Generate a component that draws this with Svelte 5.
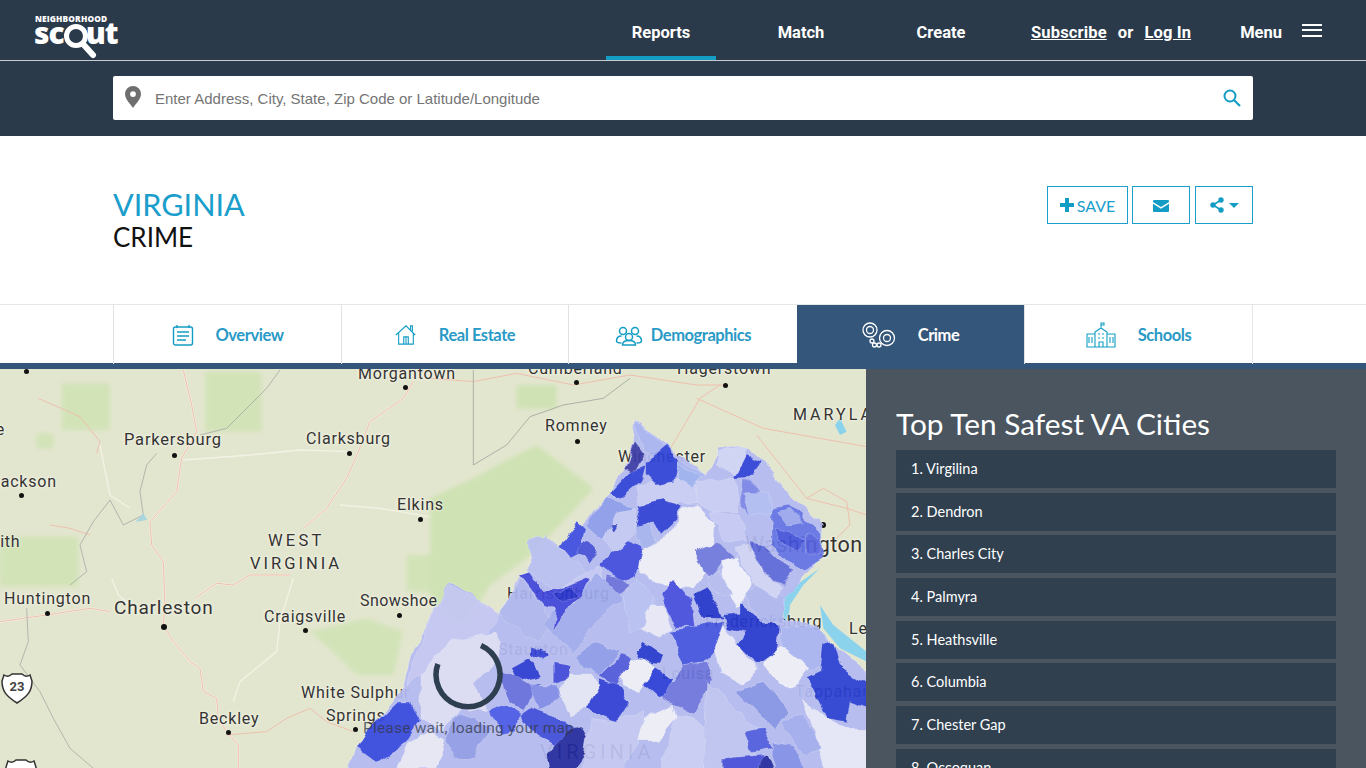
<script>
  const cities = ['Virgilina', 'Dendron', 'Charles City', 'Palmyra', 'Heathsville', 'Columbia', 'Chester Gap', 'Occoquan'];

  // x = left edge, y = vertical centre of each map label, in map coordinates (page y - 369)
  const labels = [
    ['Morgantown', 358, 5, 16], ['Cumberland', 528, 0, 16], ['Hagerstown', 677, 0, 16], ['MARYLAND', 793, 46, 16, 3],
    ['Parkersburg', 124, 71, 16.5, 0.8], ['Clarksburg', 306, 70, 16], ['Romney', 545, 57, 16], ['Elkins', 397, 136, 16],
    ['Jackson', -9, 113, 16], ['Athe', -31, 61, 16], ['Smith', -25, 173, 16], ['WEST', 268, 172, 16.5, 3.2],
    ['VIRGINIA', 250, 195, 16.5, 3], ['Huntington', 4, 230, 16], ['Charleston', 114, 238, 19], ['Craigsville', 264, 248, 16],
    ['Snowshoe', 360, 232, 16, 0.4], ['White Sulphur', 301, 324, 16], ['Springs', 326, 347, 16], ['Beckley', 199, 350, 16],
    ['Winchester', 618, 88, 16], ['Harrisonburg', 507, 225, 16], ['Staunton', 498, 281, 16], ['Washington', 745, 176, 21.5, 0.4],
    ['Fredericksburg', 705, 253, 16], ['Leesburg', 849, 260, 16], ['Louisa', 662, 305, 16], ['Tappahannock', 795, 323, 16],
    ['VIRGINIA', 540, 383, 20, 4]
  ];

  const dots = [
    [26, 2, 2.5], [174, 86, 2.5], [349, 84, 2.5], [21, 126, 2.5], [420, 150, 2.5], [47, 244, 2.5], [164, 258, 3.2],
    [305, 261, 2.5], [399, 246, 2.5], [228, 363, 2.5], [355, 360, 2.5], [405, 18, 2.5], [576, 13, 2.5], [725, 16, 2.5],
    [577, 72, 2.5], [823, 156, 3.4]
  ];

  // choropleth shapes, traced at 3x from x 430 / y 365
  const regions = [
    ['#b4bbf2', '615,165 830,330 870,250 950,245 1000,290 1080,390 1180,480 1170,580 1070,700 1050,760 1170,780 1200,830 1310,920 1340,1240 -260,1240 -219,1149 -80,960 -50,850 0,760 60,650 210,750 270,630 300,620 300,560 340,510 395,545 540,385 610,240'],
    ['#e8e8f8', '-60,1130 0,1100 45,1120 20,1210 -100,1210'],
    ['#c4c6f4', '-70,960 -30,830 0,760 60,660 210,750 170,800 30,880'],
    ['#dcdcf6', '-30,930 60,830 200,800 210,880 130,960 180,1040 100,1030 30,1100 -30,1060'],
    ['#a9b4f2', '615,165 700,240 750,290 830,330 780,360 720,290 640,260'],
    ['#d0d4f8', '860,260 950,245 945,300 915,330 860,300'],
    ['#c8ccf5', '620,360 740,340 820,350 800,410 630,420'],
    ['#c8ccf5', '800,350 920,340 930,440 850,440 800,410'],
    ['#9db0f0', '740,300 790,320 820,335 790,365 740,340'],
    ['#3a3aa8', '615,235 640,270 620,325 580,310'],
    ['#2f42d8', '650,290 710,240 745,280 730,350 680,360 650,330'],
    ['#2f42d8', '540,385 600,320 650,300 640,340 570,400'],
    ['#2f42d8', '950,270 995,290 975,335 915,340'],
    ['#7a84e8', '940,340 985,370 1000,420 960,450 930,410'],
    ['#eeeefa', '760,430 800,415 850,470 840,600 790,670 700,660 630,620 620,570 700,520 740,470'],
    ['#2f40d6', '630,420 700,405 755,425 740,460 690,510 670,470 610,500'],
    ['#8c9cec', '465,480 530,395 610,430 600,490 520,530'],
    ['#c3c8f5', '520,530 560,440 620,430 610,510 550,570'],
    ['#3d4ee0', '395,545 440,465 465,490 450,560 420,575'],
    ['#4450d8', '450,540 480,525 505,560 480,590 440,560'],
    ['#3f4ce0', '510,600 540,570 600,525 640,550 615,630 570,650'],
    ['#a3b3f0', '610,490 660,480 680,530 640,555'],
    ['#6a70dc', '530,630 560,640 600,660 560,695 520,670'],
    ['#3344cc', '535,480 560,480 545,505'],
    ['#b8c0f2', '300,520 340,515 395,550 420,580 470,620 380,680 300,620'],
    ['#c2c6f5', '380,680 470,620 510,600 520,670 480,640'],
    ['#adb6f0', '210,750 270,640 340,720 370,780 320,830'],
    ['#9fabee', '340,780 370,740 430,720 500,620 530,650 580,700 500,770 430,860'],
    ['#3f45dc', '270,630 300,620 340,680 400,670 470,640 480,640 450,700 410,730 370,800 380,730 340,720'],
    ['#2630cc', '370,690 430,665 440,700 400,710'],
    ['#b6c0f3', '580,690 620,640 670,700 660,780 600,800'],
    ['#e8e8fa', '660,720 700,720 730,790 690,820 640,790'],
    ['#454ee0', '690,690 735,645 770,690 790,700 800,790 740,790'],
    ['#2234cc', '790,690 830,670 870,730 880,760 820,760'],
    ['#2538d0', '880,750 930,745 930,710 990,760 1050,790 1040,860 985,900 950,870 920,840 945,800 890,790'],
    ['#adb6f0', '940,690 1000,660 1060,700 1060,780 1000,770'],
    ['#a9b4f2', '1050,790 1170,780 1200,840 1180,900 1130,920 1060,880'],
    ['#eaeafa', '840,800 880,780 950,880 985,910 940,960 870,920'],
    ['#eeeefa', '1000,900 1050,840 1140,910 1100,960 1050,960'],
    ['#2a40d4', '1180,840 1210,830 1230,900 1340,980 1340,1040 1260,1010 1250,1070 1190,1060 1130,940 1170,920'],
    ['#b0bcf4', '940,380 1020,380 1020,440 960,450'],
    ['#6272e6', '1020,430 1080,420 1170,500 1180,580 1130,610 1090,610 1020,540'],
    ['#9aa6f0', '1040,440 1080,430 1120,470 1070,480'],
    ['#4452dc', '1030,490 1080,500 1130,530 1100,560 1040,520'],
    ['#5462e0', '1130,510 1170,520 1170,570 1130,560'],
    ['#c5c8f5', '840,440 930,450 950,530 880,530'],
    ['#d0d3f7', '915,550 960,540 1000,620 1060,670 1040,700 970,660'],
    ['#5c68dc', '960,530 1000,540 1060,600 1090,620 1060,660 1000,620'],
    ['#7078e0', '790,560 860,530 915,580 870,600 850,640 820,620'],
    ['#f0f0fc', '870,590 920,575 965,660 920,730 890,660'],
    ['#b5bcf2', '830,640 870,620 910,690 880,700 840,670'],
    ['#4352e0', '720,800 790,790 880,770 850,860 820,890 760,900'],
    ['#2538d0', '620,860 640,830 700,870 690,900 640,895'],
    ['#6d74de', '690,1000 730,950 760,900 830,890 850,940 790,1050'],
    ['#2a3ed8', '640,960 680,910 730,940 710,990 685,1000'],
    ['#eeeefa', '570,890 640,880 680,910 630,980 580,960'],
    ['#4f58dc', '510,930 570,870 610,880 560,960'],
    ['#2f3ed6', '470,1030 510,940 570,960 600,1010 560,1070'],
    ['#e4e4f8', '380,980 420,930 480,930 510,960 470,1030 420,1050'],
    ['#8e9cec', '440,870 500,830 570,860 510,930 460,910'],
    ['#2a3ad4', '245,910 300,880 330,930 270,950'],
    ['#3542d8', '300,850 360,870 340,890 300,870'],
    ['#3f4adc', '370,890 425,900 420,940 370,955'],
    ['#666ede', '200,910 250,930 300,960 330,950 280,1040 240,1010'],
    ['#808ae8', '300,960 380,960 390,1000 330,1040'],
    ['#4a58e8', '185,1040 230,1020 270,1045 260,1100 210,1110'],
    ['#3f4ddc', '270,1050 300,1030 410,1070 440,1090 400,1150 330,1120'],
    ['#232ba0', '420,1090 450,1080 480,1140 410,1240 360,1240 350,1170'],
    ['#909ce8', '45,1110 90,1045 180,1090 130,1180 80,1180'],
    ['#c3c7f4', '480,1060 550,1070 640,1040 620,1140 560,1240 450,1240'],
    ['#eeeefa', '640,1060 730,1020 740,1060 680,1130 620,1130'],
    ['#c8ccf5', '740,1050 790,1060 830,1090 820,1240 680,1240'],
    ['#bfc4f3', '830,950 880,1000 920,1040 1000,1100 940,1240 820,1240'],
    ['#8594e8', '920,980 1000,950 1080,1040 1030,1090'],
    ['#505ce0', '940,1100 1000,1090 1030,1150 960,1160'],
    ['#454ddc', '880,1180 1000,1170 1020,1240 880,1240'],
    ['#232ba0', '990,1180 1010,1170 1040,1240 980,1240'],
    ['#e6e6fa', '1120,1000 1190,1060 1240,1090 1340,1090 1340,1240 1200,1240'],
    ['#a0acf0', '1050,1070 1120,1050 1180,1150 1120,1170'],
    ['#828fea', '1030,1130 1090,1140 1140,1240 1030,1240'],
    ['#3546e0', '-99,1011 -60,1011 -30,1071 -69,1131 -159,1194 -219,1149 -189,1101 -150,1059']
  ];
</script>

<div class="page">
  <header class="topbar">
    <a class="logo" href="#top">
      <span class="logo-small">NEIGHBORHOOD</span>
      <span class="logo-word">sc<svg class="logo-glass" viewBox="0 0 36 38" aria-hidden="true"><circle cx="13" cy="13" r="9.5" fill="none" stroke="#fff" stroke-width="5"/><path d="M20 21 L30 32" stroke="#fff" stroke-width="6" stroke-linecap="round"/></svg>ut</span>
    </a>
    <nav class="mainnav">
      <a class="navitem active" href="#top">Reports</a>
      <a class="navitem" href="#top">Match</a>
      <a class="navitem" href="#top">Create</a>
    </nav>
    <div class="account"><a href="#top">Subscribe</a><span>or</span><a href="#top">Log In</a></div>
    <div class="menu">Menu <span class="burger"><i></i><i></i><i></i></span></div>
  </header>

  <div class="searchband">
    <div class="search">
      <svg class="pin" viewBox="0 0 16 22" aria-hidden="true"><path fill="#6e6e6e" fill-rule="evenodd" d="M8 0a8 8 0 0 1 8 8c0 5-5 9.500-8 14C5 17.500 0 13 0 8a8 8 0 0 1 8-8zm0 5.200a2.900 2.900 0 1 0 0 5.800 2.900 2.900 0 0 0 0-5.800z"/></svg>
      <span class="placeholder">Enter Address, City, State, Zip Code or Latitude/Longitude</span>
      <svg class="lens" viewBox="0 0 18 18" aria-hidden="true"><circle cx="7" cy="7" r="5.500" fill="none" stroke="#139dc4" stroke-width="2"/><path d="M11 11l6 6" stroke="#139dc4" stroke-width="2.200"/></svg>
    </div>
  </div>

  <section class="titlebar">
    <div>
      <h1>VIRGINIA</h1>
      <h2>CRIME</h2>
    </div>
    <div class="actions">
      <button class="save"><svg viewBox="0 0 14 14" width="14" height="14" aria-hidden="true"><path fill="#139dc4" d="M5 0h4v5h5v4H9v5H5V9H0V5h5z"/></svg>SAVE</button>
      <button class="mail"><svg viewBox="0 0 16 12" width="16" height="12" aria-hidden="true"><path fill="#139dc4" d="M1 0h14a1 1 0 0 1 1 1v1L8 7 0 2V1a1 1 0 0 1 1-1zM0 3.800l8 5 8-5V11a1 1 0 0 1-1 1H1a1 1 0 0 1-1-1z"/></svg></button>
      <button class="share"><svg viewBox="0 0 14 16" width="14" height="16" aria-hidden="true"><circle cx="11" cy="3" r="2.700" fill="#139dc4"/><circle cx="3" cy="8" r="2.700" fill="#139dc4"/><circle cx="11" cy="13" r="2.700" fill="#139dc4"/><path d="M11 3L3 8l8 5" fill="none" stroke="#139dc4" stroke-width="1.600"/></svg><svg viewBox="0 0 10 5" width="10" height="5" aria-hidden="true"><path fill="#139dc4" d="M0 0h10L5 5z"/></svg></button>
    </div>
  </section>

  <nav class="tabs">
    <div class="tabrow">
      <a class="tab" href="#top">
        <svg class="ticon" viewBox="0 0 22 22" aria-hidden="true"><g fill="none" stroke="#139dc4" stroke-width="1.400"><rect x="1.500" y="3" width="19" height="18" rx="2"/><path d="M5 4V1M17 4V1M5 8h12M5 12h12M5 16h9"/></g></svg>
        <span>Overview</span>
      </a>
      <a class="tab" href="#top">
        <svg class="ticon" viewBox="0 0 24 24" aria-hidden="true"><g fill="none" stroke="#139dc4" stroke-width="1.200"><path d="M1 12L12 2l10 10M4 10v12h16V10M17 6V2h2v6M9.500 22v-8h5v8M12 14v8"/></g></svg>
        <span>Real Estate</span>
      </a>
      <a class="tab demo" href="#top">
        <svg class="ticon wide" viewBox="0 0 28 20" aria-hidden="true"><g fill="none" stroke="#139dc4" stroke-width="1.500"><circle cx="8" cy="5" r="3.500"/><circle cx="20" cy="5" r="3.500"/><circle cx="14" cy="11" r="3.500"/><path d="M1.500 15c0-3 2-5 5-5M26.500 15c0-3-2-5-5-5M7.500 19c0-3 2.500-4.500 6.500-4.500s6.500 1.500 6.500 4.500z"/><path d="M1.500 15c0 1.500 2 2 5 2M26.500 15c0 1.500-2 2-5 2"/></g></svg>
        <span>Demographics</span>
      </a>
      <a class="tab current" href="#top">
        <svg class="ticon cuffs" viewBox="0 0 34 26" aria-hidden="true"><g fill="none" stroke="#fff" stroke-width="1.300"><circle cx="8" cy="8" r="7"/><circle cx="8" cy="8" r="3.500"/><circle cx="25" cy="16" r="7.500"/><circle cx="25" cy="16" r="3.500"/><circle cx="10" cy="19" r="2"/><circle cx="12.500" cy="23" r="2"/><circle cx="17" cy="23" r="2"/></g></svg>
        <span>Crime</span>
      </a>
      <a class="tab" href="#top">
        <svg class="ticon school" viewBox="0 0 30 26" aria-hidden="true"><g fill="none" stroke="#139dc4" stroke-width="1.100"><path d="M1 12h8v13H1zM21 12h8v13h-8zM9 10l6-4 6 4v15H9zM15 6V1h3v2h-3M13 25v-5h4v5M12 12h2M16 12h2M12 16h2M16 16h2M3 15v6M6 15v6M24 15v6M27 15v6"/></g></svg>
        <span>Schools</span>
      </a>
    </div>
  </nav>

  <main class="content">
    <div class="map">
      <svg class="basemap" viewBox="0 0 866 399" aria-hidden="true">
        <defs>
          <filter id="soft" x="-20%" y="-20%" width="140%" height="140%"><feGaussianBlur stdDeviation="7" /></filter>
        </defs>
        <g transform="translate(0 -4) scale(0.3333)">
          <g fill="#d2e3b8" filter="url(#soft)">
            <rect x="185" y="55" width="145" height="140"/>
            <rect x="615" y="20" width="170" height="180"/>
            <rect x="0" y="515" width="235" height="150"/>
            <rect x="110" y="205" width="50" height="45"/>
            <path d="M930 800l170-40 110 40-30 130-110 0-60-60z"/>
            <rect x="1220" y="570" width="100" height="110"/>
          </g>
          <g fill="none" stroke="#f3efdf" stroke-width="6">
            <path d="M550 15l25 105 15 80-45 80-15 100-80 90 5 70 35 50 5 130-5 60 30 50 50 60 30 20 10 70 40 20 5 60 25 40 35 40v69"/>
            <path d="M0 770l140-20 130-20 60 10"/>
            <path d="M585 700l65-45 50 5 50-30h120"/>
            <path d="M910 490l70-60 60-90 35-80 35-90 100-70 30-50"/>
          </g>
          <g fill="none" stroke="#eebfae" stroke-width="3">
            <path d="M550 15l25 105 15 80-45 80-15 100-80 90 5 70 35 50 5 130-5 60 30 50 50 60 30 20 10 70 40 20 5 60 25 40 35 40v69"/>
            <path d="M0 770l140-20 130-20 60 10"/>
            <path d="M585 700l65-45 50 5 50-30h120"/>
            <path d="M150 480l60 10 60 20"/>
            <path d="M115 100l125 55 60 75-10 35"/>
            <path d="M680 1110l120-10 60-40 70-30 50 40 80 30"/>
            <path d="M910 490l70-60 60-90 35-80 35-90 100-70 30-50"/>
          </g>
          <g fill="none" stroke="#f4f2e4" stroke-width="4">
            <path d="M550 285l200-15 150-15 140 5"/>
            <path d="M300 240l30 150 60 40"/>
            <path d="M1020 420l120 10 180 30"/>
            <path d="M880 640l-40 130-10 90-110 90-20 60"/>
            <path d="M335 640l20 50 60 50"/>
          </g>
          <g fill="none" stroke="#9da5a0" stroke-width="2.200">
            <path d="M840 15l-40 55-120 120-80 20"/>
            <path d="M470 265l-30 35-20 80 10 70-60 30-40-75-50 65-40 70 20 80-50 40"/>
            <path d="M80 730l5 100-25 70 60 80 40 80 50 90 70 60"/>
          </g>
          <g fill="#a9d5de"><path d="M430 445l12 20-35 5z"/></g>
        </g>
        <g transform="translate(430 -4) scale(0.3333)">
          <g fill="#cfe2b4" filter="url(#soft)">
            <path d="M0 400l130-60 130-70 60-30 170 130-100 110-100 100-110 80-80 130-100-90z"/>
            <rect x="260" y="60" width="120" height="70"/>
          </g>
          <g fill="none" stroke="#eebfae" stroke-width="3">
            <path d="M0 40l130 10 130-25 170 35 170-30 200 30h80"/>
            <path d="M870 60l-60 40-100 170"/>
            <path d="M800 100l200 90 310 55"/>
            <path d="M980 210l150 190 120 30 60 20"/>
            <path d="M1130 400l50-30 70 40 10 70-50 50"/>
          </g>
          <g fill="none" stroke="#8f9691" stroke-width="2">
            <path d="M130 15v285l100-60 70-85 100-35 120-20 80-60"/>
          </g>
          <g fill="#8bd3ec">
            <path d="M1170 720l40 60 100 80v30l-80-40-50-60z"/>
            <path d="M1060 700l25-30 85-60-50 50-40 60-5 50h-15z"/>
            <path d="M1230 160l20 40-20 10-15-30z"/>
          </g>
        </g>
      </svg>

      <div class="shield"><svg viewBox="0 0 32 34" aria-hidden="true"><path fill="#fff" stroke="#333" stroke-width="1.500" d="M3 4c3 2 6 1 8-1h10c2 2 5 3 8 1l2 6c0 10-4 15-15 22C5 25 1 20 1 10z"/></svg><span>23</span></div>
      <div class="shield second"><svg viewBox="0 0 32 34" aria-hidden="true"><path fill="#fff" stroke="#333" stroke-width="1.500" d="M3 4c3 2 6 1 8-1h10c2 2 5 3 8 1l2 6c0 10-4 15-15 22C5 25 1 20 1 10z"/></svg></div>

      {#each dots as d}
        <i class="dot" style="left:{d[0] - d[2]}px;top:{d[1] - d[2]}px;width:{d[2] * 2}px;height:{d[2] * 2}px"></i>
      {/each}
      {#each labels as l}
        <span class="label" style="left:{l[1]}px;top:{l[2]}px;font-size:{l[3]}px;letter-spacing:{l[4] || 0.8}px">{l[0]}</span>
      {/each}

      <svg class="choropleth" viewBox="0 0 866 399" aria-hidden="true">
        <defs>
          <!-- roughens the straight polygon edges into county-like borders -->
          <filter id="rough" filterUnits="userSpaceOnUse" x="-20" y="-20" width="906" height="439">
            <feTurbulence type="fractalNoise" baseFrequency="0.06" numOctaves="2" seed="4" />
            <feDisplacementMap in="SourceGraphic" scale="9" xChannelSelector="R" yChannelSelector="G" />
          </filter>
        </defs>
        <g filter="url(#rough)">
          <g transform="translate(430 -4) scale(0.3333)">
            {#each regions as r}
              <polygon points={r[1]} fill={r[0]} />
            {/each}
          </g>
        </g>
      </svg>

      <svg class="spinner" viewBox="0 0 70 70" aria-hidden="true"><path d="M48 5.500A32 32 0 1 1 4.900 24" fill="none" stroke="#2d3f50" stroke-width="5.500"/></svg>
      <div class="wait">Please wait, loading your map</div>
    </div>

    <aside class="side">
      <h3>Top Ten Safest VA Cities</h3>
      <ol>
        {#each cities as city, i}
          <li>{i + 1}. {city}</li>
        {/each}
      </ol>
    </aside>
  </main>
</div>

<style>
  :global(body) {
    margin: 0;
    background: #fff;
    overflow: hidden;
  }

  .page {
    height: 768px;
    overflow: hidden;
    font-family: Lato, sans-serif;
  }

  a {
    color: inherit;
    text-decoration: none;
  }

  .topbar {
    display: flex;
    align-items: center;
    height: 60px;
    padding-left: 34px;
    background: #2b3a4a;
    border-bottom: 1px solid #c4cbd1;
    color: #fff;
    font: 700 16.500px Roboto, sans-serif;
  }

  .logo {
    position: relative;
    display: block;
    width: 85px;
    height: 60px;
    color: #fff;
  }

  .logo-small {
    position: absolute;
    left: 1px;
    top: 14px;
    font: 800 8.300px/10px "Open Sans", sans-serif;
    letter-spacing: 0.150px;
    white-space: nowrap;
  }

  .logo-word {
    position: absolute;
    left: 0;
    top: 14px;
    display: flex;
    font: 800 30px/38px "Open Sans", sans-serif;
    letter-spacing: -1px;
  }

  .logo-glass {
    width: 36px;
    height: 38px;
    margin: 9px -13px 0 -1px;
  }

  .mainnav {
    display: flex;
    gap: 30px;
    margin-left: 487px;
    height: 60px;
  }

  .navitem {
    display: flex;
    align-items: center;
    justify-content: center;
    box-sizing: border-box;
    width: 110px;
    height: 60px;
    padding-top: 8px;
    border-bottom: 4px solid transparent;
  }

  .navitem.active {
    border-bottom-color: #139dc4;
  }

  .account {
    display: flex;
    gap: 11px;
    margin-left: 35px;
    padding-top: 4px;
    letter-spacing: 0.150px;
  }

  .account a {
    text-decoration: underline;
  }

  .menu {
    display: flex;
    align-items: center;
    gap: 20px;
    margin-left: 49px;
    padding-top: 4px;
  }

  .burger {
    display: flex;
    flex-direction: column;
    gap: 3.500px;
    width: 20px;
    margin-top: -4px;
  }

  .burger i {
    height: 2px;
    background: #fff;
  }

  .searchband {
    height: 75px;
    padding: 15px 113px 0;
    box-sizing: border-box;
    background: #2b3a4a;
  }

  .search {
    display: flex;
    align-items: center;
    height: 44px;
    background: #fff;
    border-radius: 2px;
    padding: 0 13px 0 12px;
  }

  .pin {
    width: 16px;
    height: 22px;
    margin-right: 14px;
    margin-top: -2px;
  }

  .placeholder {
    flex: 1;
    padding-top: 1px;
    color: #757575;
    font: 15px "Liberation Sans", Arial, sans-serif;
  }

  .lens {
    width: 18px;
    height: 18px;
    margin-right: -1px;
  }

  .titlebar {
    display: flex;
    justify-content: space-between;
    height: 168px;
    box-sizing: border-box;
    padding: 50px 113px 0;
  }

  h1 {
    margin: 0;
    color: #1a9ecb;
    font: 400 30.600px/38px Lato, sans-serif;
  }

  h2 {
    margin: -1px 0 0;
    color: #111;
    font: 400 26px/28px Lato, sans-serif;
  }

  .actions {
    display: flex;
    height: 38px;
  }

  button {
    display: flex;
    align-items: center;
    justify-content: center;
    box-sizing: border-box;
    height: 38px;
    background: #fff;
    border: 1px solid #1a9ecb;
    padding: 0;
    color: #1a9ecb;
    font: 400 16px Lato, sans-serif;
  }

  .save {
    width: 81px;
    gap: 3px;
  }

  .mail {
    width: 58px;
    margin-left: 4px;
  }

  .mail svg {
    margin-top: 1px;
  }

  .share {
    width: 58px;
    margin-left: 5px;
    gap: 5px;
  }

  .tabs {
    border-top: 1px solid #e6e6e6;
    border-bottom: 6px solid #34567a;
    height: 58px;
  }

  .tabrow {
    display: grid;
    grid-template-columns: 228px 227px 229px 227px 228px;
    width: 1139px;
    margin-left: 113px;
    height: 59px;
    border-right: 1px solid #e6e6e6;
  }

  .tab {
    display: flex;
    align-items: center;
    justify-content: center;
    gap: 22px;
    height: 59px;
    border-left: 1px solid #e2e2e2;
    box-sizing: border-box;
    color: #2a9ac6;
    font: 700 16.500px Lato, sans-serif;
    letter-spacing: -0.450px;
  }

  .tab.demo {
    gap: 8px;
  }

  .tab.current {
    background: #34567a;
    border-left: 0;
    color: #fff;
  }

  .ticon {
    width: 22px;
    height: 22px;
  }

  .ticon.wide {
    width: 28px;
    height: 20px;
    margin-top: 2px;
  }

  .ticon.cuffs {
    width: 34px;
    height: 26px;
  }

  .ticon.school {
    width: 30px;
    height: 26px;
  }

  .content {
    display: flex;
    height: 399px;
  }

  .map {
    position: relative;
    flex: 0 0 866px;
    height: 399px;
    overflow: hidden;
    background: #e3e6cf;
  }

  .basemap,
  .choropleth {
    position: absolute;
    inset: 0;
    width: 866px;
    height: 399px;
  }

  .basemap {
    filter: blur(0.4px);
  }

  .choropleth {
    opacity: 0.92;
  }

  .choropleth polygon {
    stroke: rgba(255, 255, 255, 0.4);
    stroke-width: 1.500;
  }

  .label {
    position: absolute;
    transform: translateY(-50%);
    color: #333;
    font-family: Roboto, sans-serif;
    line-height: 1;
    white-space: nowrap;
    text-shadow: 0 0 2px #f6f6ea, 0 0 3px #f6f6ea;
  }

  .dot {
    position: absolute;
    border-radius: 50%;
    background: #111;
  }

  .shield {
    position: absolute;
    left: 1px;
    top: 302px;
    width: 32px;
    height: 34px;
  }

  .shield.second {
    left: 5px;
    top: 388px;
  }

  .shield span {
    position: absolute;
    inset: 8px 0 0;
    color: #444;
    font: 700 13px Roboto, sans-serif;
    text-align: center;
  }

  .spinner {
    position: absolute;
    left: 433px;
    top: 271px;
    width: 70px;
    height: 70px;
  }

  .wait {
    position: absolute;
    left: 363px;
    top: 349px;
    color: rgba(50, 55, 70, 0.75);
    font: 15.500px/20px Roboto, sans-serif;
    letter-spacing: 0.200px;
    white-space: nowrap;
  }

  .side {
    flex: 1;
    padding: 35px 30px 0;
    background: #4a555f;
    color: #fff;
  }

  h3 {
    margin: 0 0 6px;
    font: 400 29.800px/40px Lato, sans-serif;
  }

  ol {
    display: flex;
    flex-direction: column;
    gap: 4.700px;
    margin: 0;
    padding: 0;
    list-style: none;
  }

  li {
    flex: none;
    height: 38px;
    padding-left: 15px;
    background: #30404f;
    font-size: 14.500px;
    line-height: 38px;
  }
</style>
